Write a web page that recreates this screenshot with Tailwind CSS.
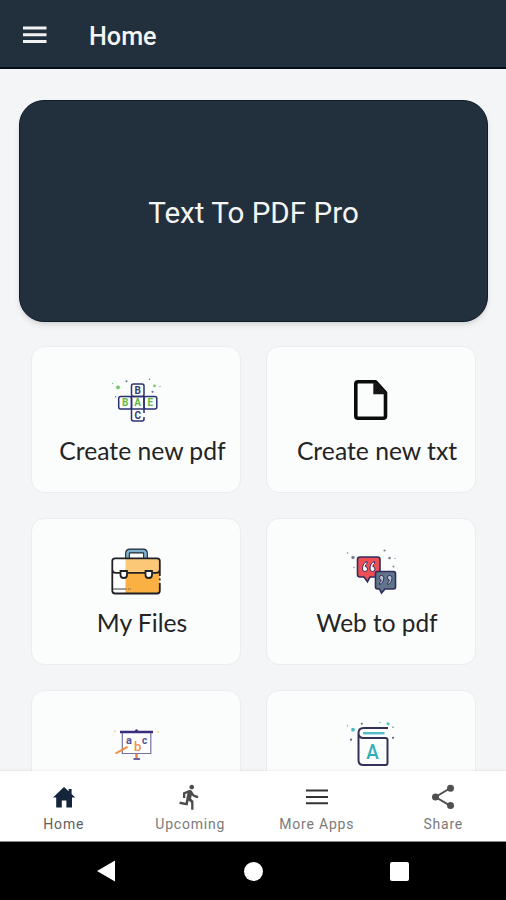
<!DOCTYPE html>
<html lang="en">
<head>
    <meta charset="UTF-8">
    <meta name="viewport" content="width=device-width, initial-scale=1.0">
    <title>Text To PDF Pro</title>
    <script src="https://cdn.jsdelivr.net/npm/@tailwindcss/browser@4"></script>
</head>
<body class="h-[900px] w-[506px] flex flex-col overflow-hidden bg-[#f3f5f7] font-['Roboto',sans-serif]">

    <!-- App bar -->
    <header class="h-[69px] shrink-0 flex items-center pl-[23px] pb-px bg-[#222f3d] border-b-2 border-[#050d18]">
        <button aria-label="Menu" class="mt-[3px]">
            <svg class="block w-6 h-[18px]" viewBox="0 0 24 18" fill="#f2f2f2">
                <path d="M0 .5h23.500v3H0zM0 7.300h23.500v3H0zM0 14.100h23.500v3H0z"/>
            </svg>
        </button>
        <h1 class="ml-[42px] mt-[7px] text-[25.200px] leading-7 font-medium text-[#f5f5f5]">Home</h1>
    </header>

    <!-- Content -->
    <main class="h-[702px] shrink-0 overflow-hidden px-[19px] pt-[31px]">
        <section class="h-[222px] w-[469px] rounded-[25px] bg-[#222f3d] border border-[#101c2a] shadow-md flex items-center justify-center">
            <h2 class="text-[29.600px] leading-9 text-[#f5f5f5] mt-[3px]">Text To PDF Pro</h2>
        </section>

        <div class="grid grid-cols-[210px_210px] gap-[25px] mt-6 pl-3">
            <a href="#" class="h-[147px] pt-[23px] flex flex-col items-center bg-[#fbfcfc] border border-[#e9edef] rounded-[13px]">
                <svg class="w-20 h-[60px] shrink-0" viewBox="-4 0 80 60" fill="none">
                    <g stroke="#2b3170" stroke-width="1.500">
                        <rect x="31.500" y="14" width="12.500" height="12.500" rx="2"/>
                        <rect x="18.700" y="26.500" width="12.800" height="12.500" rx="2"/>
                        <rect x="31.500" y="26.500" width="12.500" height="12.500"/>
                        <rect x="44" y="26.500" width="12.800" height="12.500" rx="2"/>
                        <path d="M31.500 39v10q0 2 2 2h8.500q2 0 2-2v-2M44 39v4"/>
                    </g>
                    <g class="font-['Roboto',sans-serif] font-bold text-[10px]" text-anchor="middle">
                        <text x="37.700" y="23.800" fill="#343a78">B</text>
                        <text x="25.100" y="36.300" fill="#5dbb46">B</text>
                        <text x="37.700" y="36.300" fill="#5dbb46">A</text>
                        <text x="50.300" y="36.300" fill="#5dbb46">E</text>
                        <text x="37.700" y="48.800" fill="#343a78">C</text>
                    </g>
                    <g fill="#74c365"><circle cx="18" cy="17.300" r="1.900"/><circle cx="54.500" cy="15.800" r="1.400"/><circle cx="12.500" cy="13.500" r=".7"/></g>
                    <g fill="#6b7096"><circle cx="26.500" cy="11.300" r="1"/><circle cx="52.500" cy="21.800" r="1.100"/><circle cx="15.700" cy="26.700" r=".8"/><circle cx="49.500" cy="9.300" r=".8"/><circle cx="60" cy="16.500" r=".6"/></g>
                </svg>
                <span class="mt-[5px] pl-[13px] font-['Lato',sans-serif] text-[24.700px] leading-8 text-[#242424] whitespace-nowrap">Create new pdf</span>
            </a>

            <a href="#" class="h-[147px] pt-[23px] flex flex-col items-center bg-[#fbfcfc] border border-[#e9edef] rounded-[13px]">
                <svg class="w-20 h-[60px] shrink-0" viewBox="-4 0 80 60" fill="none">
                    <path d="M23 11.800h17.500l10 11v23.200q0 2.200-2.200 2.200H23q-2.200 0-2.200-2.200V14q0-2.200 2.200-2.200z" stroke="#0b0b0b" stroke-width="3.600" stroke-linejoin="round"/>
                    <path d="M38.300 12h3.200l9.500 10.500v1.800H38.300z" fill="#161616"/>
                </svg>
                <span class="mt-[5px] pl-3 font-['Lato',sans-serif] text-[24.700px] leading-8 text-[#242424] whitespace-nowrap">Create new txt</span>
            </a>

            <a href="#" class="h-[147px] pt-[23px] flex flex-col items-center bg-[#fbfcfc] border border-[#e9edef] rounded-[13px]">
                <svg class="w-20 h-[60px] shrink-0" viewBox="-4 2 80 60" fill="none">
                    <path d="M27.500 18v-4.500q0-2.500 2.500-2.500h13q2.500 0 2.500 2.500V18" stroke="#1d2733" stroke-width="4.800"/>
                    <path d="M27.500 18.500v-5q0-2.500 2.500-2.500h13q2.500 0 2.500 2.500v5" stroke="#7eb0cf" stroke-width="2.600"/>
                    <rect x="12.300" y="18.500" width="47.500" height="35" rx="3" fill="#fff"/>
                    <path d="M25.500 18.500h32q2.300 0 2.300 2.500v9q0 3-3 3H25.500z" fill="#fbc878"/>
                    <path d="M25.500 33h34.300v18q0 2.500-2.500 2.500H25.500z" fill="#fbb044"/>
                    <path d="M59.800 36v-15q0-2.700-2.700-2.700H15q-2.700 0-2.700 2.700v29.800q0 2.700 2.700 2.700h42.100q2.700 0 2.700-2.700V43M59.800 38.500v1.800M12.300 29q0 3.800 3.500 3.800h4.500m7 0h18m7 0h4q3.500 0 3.500-3.800" stroke="#202125" stroke-width="1.800"/>
                    <path d="M20.500 31h6.500v4q0 3-3.250 3t-3.250-3zM45.500 31H52v4q0 3-3.250 3t-3.250-3z" fill="#fff" stroke="#202125" stroke-width="1.800"/>
                    <path d="M13 49h13.500m1.500 0h.8m1 0h.8" stroke="#45413b" stroke-width="1.200"/>
                </svg>
                <span class="mt-[5px] pl-3 font-['Lato',sans-serif] text-[24.700px] leading-8 text-[#242424] whitespace-nowrap">My Files</span>
            </a>

            <a href="#" class="h-[147px] pt-[23px] flex flex-col items-center bg-[#fbfcfc] border border-[#e9edef] rounded-[13px]">
                <svg class="w-20 h-[60px] shrink-0" viewBox="-4 2 80 60" fill="none">
                    <path d="M25 17h17.500q2.500 0 2.500 2.500v15q0 2.500-2.500 2.500H35l-2.500 4.800-3.500-4.800h-4q-2.500 0-2.500-2.500v-15Q22.500 17 25 17z" fill="#f04e55" stroke="#302c5c" stroke-width="1.600"/>
                    <path d="M42.500 31.500h16q2 0 2 2V47q0 2-2 2H50l-3.500 4-2-4h-2q-2 0-2-2V33.500q0-2 2-2z" fill="#617488" stroke="#302c5c" stroke-width="1.600"/>
                    <g fill="#fff" stroke="#302c5c" stroke-width="1">
                        <path d="M32 21.500q-4.500 1.500-4.500 7.500a2.500 2.500 0 1 0 2.800-2.500q0-2 1.700-3zM39.500 21.500q-4.500 1.500-4.500 7.500a2.500 2.500 0 1 0 2.800-2.500q0-2 1.700-3z"/>
                    </g>
                    <g fill="#b9c4d0" stroke="#302c5c" stroke-width="1">
                        <path d="M44.500 44.500q4.300-1.500 4.300-6.800a2.300 2.300 0 1 0-2.600 2.300q0 1.700-1.700 2.700zM52.700 44.500q4.300-1.500 4.300-6.800a2.300 2.300 0 1 0-2.600 2.300q0 1.700-1.700 2.700z"/>
                    </g>
                    <g fill="#778590"><circle cx="18" cy="17.500" r="1.700"/><circle cx="12.500" cy="13" r=".8"/><circle cx="49.500" cy="10.500" r="1.100"/><circle cx="54.500" cy="18" r="1.300"/><circle cx="58.500" cy="26.500" r="1"/><circle cx="60" cy="18.500" r=".6"/><circle cx="19" cy="27.500" r=".7"/></g>
                </svg>
                <span class="mt-[5px] pl-3 font-['Lato',sans-serif] text-[24.400px] leading-8 text-[#242424] whitespace-nowrap">Web to pdf</span>
            </a>

            <a href="#" class="h-[147px] pt-[23px] flex flex-col items-center bg-[#fbfcfc] border border-[#e9edef] rounded-[13px]">
                <svg class="w-20 h-[60px] shrink-0" viewBox="-4 -1 80 60" fill="none">
                    <path d="M22.300 17v21.500h28.500V17" stroke="#7771a3" stroke-width="1.200" fill="#fff"/>
                    <path d="M20 17h33" stroke="#3b2f7c" stroke-width="2.400"/>
                    <circle cx="36.500" cy="15.700" r="1.500" fill="#3b2f7c"/>
                    <path d="M15.500 38.500l12-6.700" stroke="#f08a3c" stroke-width="2"/>
                    <path d="M36.500 39v4" stroke="#e78345" stroke-width="2.400"/>
                    <path d="M33.500 44h6.500" stroke="#3b2f7c" stroke-width="1.500"/>
                    <g class="font-['Roboto',sans-serif] font-bold" text-anchor="middle">
                        <text x="29" y="29" fill="#574d92" class="text-[11px]">a</text>
                        <text x="44.700" y="28.500" fill="#574d92" class="text-[10px]">c</text>
                        <text x="37.700" y="36" fill="#f08f48" class="text-[13px] font-medium">b</text>
                    </g>
                    <g fill="#f3d395"><circle cx="15" cy="16.500" r="1"/><circle cx="58" cy="17" r="1"/><circle cx="13" cy="20" r=".5"/><circle cx="55.500" cy="14" r=".5"/></g>
                </svg>
            </a>

            <a href="#" class="h-[147px] pt-[23px] flex flex-col items-center bg-[#fbfcfc] border border-[#e9edef] rounded-[13px]">
                <svg class="w-20 h-[60px] shrink-0" viewBox="-4 -1 80 60" fill="none">
                    <path d="M53 13H28.500q-5 0-5 5v27q0 5 4.500 5h22.500q2 0 2-2V25q0-2-2-2H28.500q-5 0-5-5" stroke="#343058" stroke-width="2"/>
                    <path d="M28 18.200h21.500" stroke="#55bdc9" stroke-width="2.400"/>
                    <text x="37.500" y="44" text-anchor="middle" fill="#2eafb9" class="font-['Roboto',sans-serif] font-medium text-[21px]" textLength="12.500" lengthAdjust="spacingAndGlyphs">A</text>
                    <g fill="#49bec5"><circle cx="18" cy="14.700" r="1.900"/><circle cx="53" cy="8.700" r="1.500"/><circle cx="45" cy="7.500" r=".7"/><circle cx="12.500" cy="10.700" r=".7"/></g>
                    <g fill="#5f6280"><circle cx="26.800" cy="8.800" r="1"/><circle cx="58" cy="22.800" r="1.100"/><circle cx="16" cy="24.700" r="1.100"/><circle cx="58" cy="12.300" r=".7"/></g>
                </svg>
            </a>
        </div>
    </main>

    <!-- Bottom navigation -->
    <nav class="h-[71px] shrink-0 grid grid-cols-4 bg-white border-b border-[#8c8c8c] text-[14px] leading-4 tracking-[0.8px] text-[#7a7a7a] shadow-[0_-1px_2px_rgba(0,0,0,0.06)] relative">
        <a href="#" class="flex flex-col items-center pt-[11px] pl-px text-[#606060]">
            <svg class="w-[30px] h-[30px]" viewBox="0 0 30 30">
                <path d="M15 5L4 15.500h3.200V25.500h5.600V18.500h4.600v7H23V15.500h3.200l-3.600-3.500V7h-3v2.200z" fill="#14243b"/>
            </svg>
            <span class="mt-1">Home</span>
        </a>
        <a href="#" class="flex flex-col items-center pt-[11px] pl-px">
            <svg class="w-7 h-[30px]" viewBox="0 -.8 24 25.700" fill="#4c4c4c">
                <path d="M13.490 5.480c1.100 0 2-.9 2-2s-.9-2-2-2-2 .9-2 2 .9 2 2 2zm-3.600 13.900l1-4.400 2.100 2v6h2v-7.500l-2.100-2 .6-3c1.300 1.500 3.300 2.500 5.500 2.500v-2c-1.900 0-3.500-1-4.300-2.400l-1-1.600c-.4-.6-1-1-1.700-1-.3 0-.5.1-.8.1l-5.200 2.200v4.700h2v-3.400l1.800-.7-1.600 8.100-4.900-1-.4 2 7 1.400z"/>
            </svg>
            <span class="mt-1">Upcoming</span>
        </a>
        <a href="#" class="flex flex-col items-center pt-[11px] pl-px">
            <svg class="w-[30px] h-[30px]" viewBox="0 0 30 30">
                <path d="M4 8.500h22M4 15h22M4 21.300h22" stroke="#333" stroke-width="2"/>
            </svg>
            <span class="mt-1">More Apps</span>
        </a>
        <a href="#" class="flex flex-col items-center pt-[11px] pl-px">
            <svg class="w-[30px] h-[30px]" viewBox="0 0 30 30" fill="#505050">
                <path d="M22.500 6L7.500 15l15 8.800" fill="none" stroke="#505050" stroke-width="2"/>
                <circle cx="22.500" cy="6.300" r="3.500"/>
                <circle cx="7.500" cy="15" r="3.500"/>
                <circle cx="22.500" cy="23.500" r="3.500"/>
            </svg>
            <span class="mt-1">Share</span>
        </a>
    </nav>

    <!-- System buttons -->
    <footer class="h-[58px] shrink-0 bg-black flex items-center justify-between px-[97px]">
        <svg class="w-[18px] h-[22px]" viewBox="0 0 18 22" fill="#fff"><path d="M0 11L18 .5v21z"/></svg>
        <span class="w-[19px] h-[19px] rounded-full bg-white ml-px"></span>
        <span class="w-[19px] h-[19px] rounded-[2px] bg-white"></span>
    </footer>

</body>
</html>
